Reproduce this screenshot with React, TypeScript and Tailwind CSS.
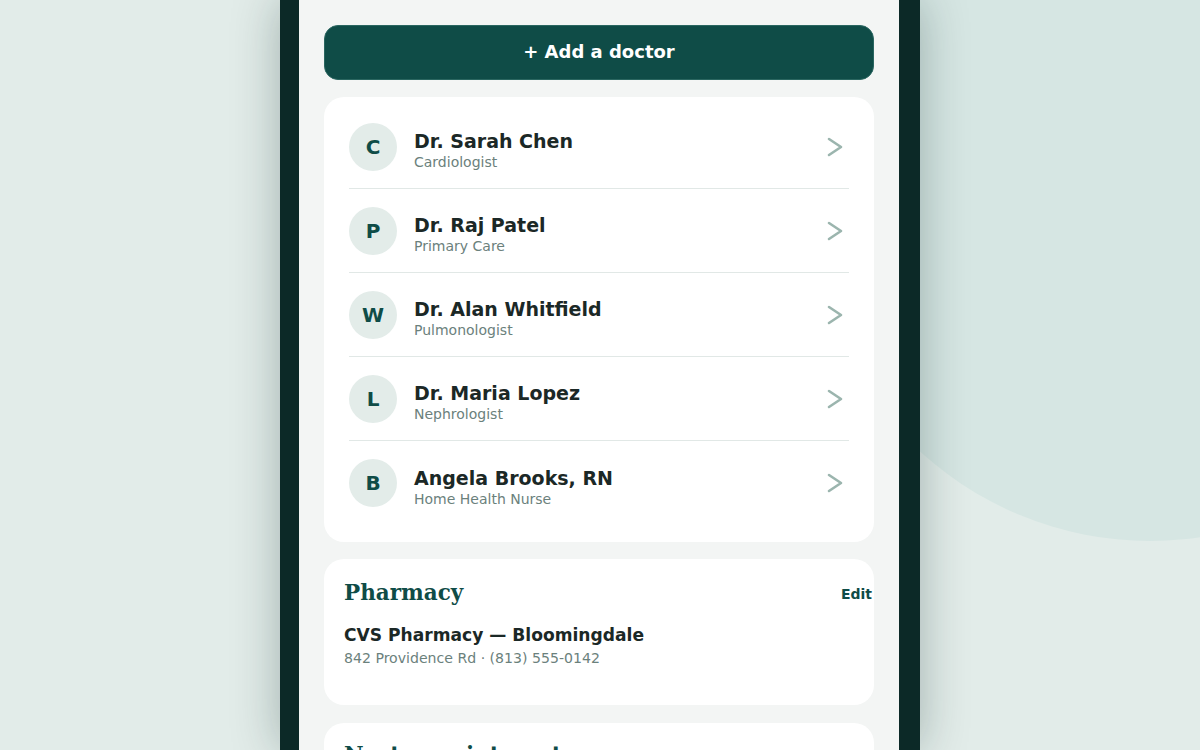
const doctors = [
  { initial: "C", name: "Dr. Sarah Chen", role: "Cardiologist" },
  { initial: "P", name: "Dr. Raj Patel", role: "Primary Care" },
  { initial: "W", name: "Dr. Alan Whitfield", role: "Pulmonologist" },
  { initial: "L", name: "Dr. Maria Lopez", role: "Nephrologist" },
  { initial: "B", name: "Angela Brooks, RN", role: "Home Health Nurse" },
];

const sans = "font-['DejaVu_Sans',sans-serif]";
const serif = "font-['DejaVu_Serif',serif]";

export default function App() {
  return (
    <div className={`relative h-[750px] w-[1200px] overflow-hidden bg-[#e2ece9] ${sans}`}>
      <div className="absolute left-[810px] top-[-139px] h-[680px] w-[680px] rounded-full bg-[#d6e6e3]" />
      <div className="relative mx-auto h-full w-[640px] border-l-[19px] border-r-[21px] border-[#0c2927] bg-[#f3f5f4] shadow-[0_0_45px_rgba(10,40,38,0.3)]">
        <div className="flex flex-col px-[25px]">
          <p className="-mt-[18px] text-[14px] leading-5 text-[#6b817c]">Tap a doctor to see their phone and address</p>
          <button className="mt-[23px] h-[55px] rounded-[14px] border border-[#2a6660] bg-[#0f4c47] pb-[2px] text-[18px] font-bold text-white">+ Add a doctor</button>
          <DoctorList />
          <PharmacyCard />
          <div className="mt-[18px] h-[80px] rounded-[20px] bg-white px-5 pt-[18px]">
            <h2 className={`${serif} text-[21.5px] font-bold leading-7 text-[#0f4c47]`}>Next appointment</h2>
          </div>
        </div>
      </div>
    </div>
  );
}

function Chevron() {
  return (
    <svg width="18" height="22" viewBox="0 0 18 22" fill="none" stroke="#9bb5ae" strokeWidth="2.6" strokeLinecap="round" strokeLinejoin="round" className="mr-[5px]">
      <polyline points="3,3 15,11 3,19" />
    </svg>
  );
}

function DoctorList() {
  return (
    <div className="mt-[17px] rounded-[20px] bg-white px-[25px] pb-[17px] pt-2">
      {doctors.map((d, i) => (
        <div key={d.name} className={`flex h-[84px] items-center gap-[17px] ${i < doctors.length - 1 ? "border-b border-[#e1e8e6]" : ""}`}>
          <div className="flex size-12 items-center justify-center rounded-full bg-[#e3ece9] text-[20px] font-bold text-[#0f4c47]">{d.initial}</div>
          <div className="flex-1 pt-[7px]">
            <p className="text-[19px] font-bold leading-6 text-[#1b2826]">{d.name}</p>
            <p className="text-[14px] leading-[18px] text-[#6b817c]">{d.role}</p>
          </div>
          <Chevron />
        </div>
      ))}
    </div>
  );
}

function PharmacyCard() {
  return (
    <div className="mt-[17px] h-[146px] rounded-[20px] bg-white px-5 pt-5">
      <div className="flex items-center justify-between">
        <h2 className={`${serif} text-[21.5px] font-bold leading-7 text-[#0f4c47]`}>Pharmacy</h2>
        <button className="-mr-[18px] mt-[2px] text-[14px] font-bold text-[#0f4c47]">Edit</button>
      </div>
      <p className="mt-[16px] text-[17.1px] font-bold leading-6 text-[#1b2826]">CVS Pharmacy — Bloomingdale</p>
      <p className="mt-[1px] text-[14.1px] leading-5 text-[#6b817c]">842 Providence Rd · (813) 555-0142</p>
    </div>
  );
}
